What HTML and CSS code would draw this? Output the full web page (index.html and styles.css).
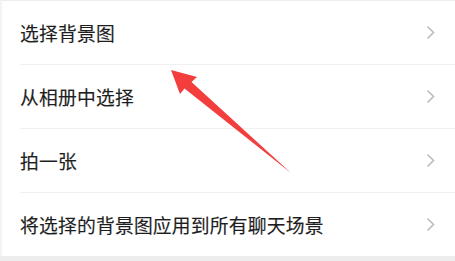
FILE: index.html
```html
<!DOCTYPE html>
<html lang="zh">
<head>
<meta charset="utf-8">
<link rel="stylesheet" href="styles.css">
</head>
<body>
<div class="page">
  <ul class="menu">
    <li class="item"><div class="inner"><span class="label">选择背景图</span><svg class="chev" viewBox="0 0 9 15"><path d="M1.5 1.5 L7.5 7.5 L1.5 13.5" fill="none" stroke="#bcbcbc" stroke-width="1.6"/></svg></div></li>
    <li class="item"><div class="inner"><span class="label">从相册中选择</span><svg class="chev" viewBox="0 0 9 15"><path d="M1.5 1.5 L7.5 7.5 L1.5 13.5" fill="none" stroke="#bcbcbc" stroke-width="1.6"/></svg></div></li>
    <li class="item"><div class="inner"><span class="label">拍一张</span><svg class="chev" viewBox="0 0 9 15"><path d="M1.5 1.5 L7.5 7.5 L1.5 13.5" fill="none" stroke="#bcbcbc" stroke-width="1.6"/></svg></div></li>
    <li class="item last"><div class="inner"><span class="label">将选择的背景图应用到所有聊天场景</span><svg class="chev" viewBox="0 0 9 15"><path d="M1.5 1.5 L7.5 7.5 L1.5 13.5" fill="none" stroke="#bcbcbc" stroke-width="1.6"/></svg></div></li>
  </ul>
  <div class="footer"></div>
  <svg class="arrow" viewBox="0 0 455 261" width="455" height="261">
    <path d="M171 70 L197 77 L191.5 82 L291 173 L184.5 88.5 L180 94 Z" fill="#f43d3d"/>
  </svg>
</div>
</body>
</html>
```

FILE: styles.css
```css
html, body {
  margin: 0;
  padding: 0;
  background: #ffffff;
}
.page {
  position: relative;
  width: 455px;
  height: 261px;
  overflow: hidden;
  background: #ffffff;
  font-family: "Noto Sans CJK SC", "Noto Sans", sans-serif;
}
.menu {
  list-style: none;
  margin: 0;
  padding: 0;
  border-top: 1px solid #ededed;
  border-left: 2px solid #f4f4f4;
}
.item {
  padding-left: 18px;
}
.inner {
  height: 63px;
  display: flex;
  align-items: center;
  justify-content: space-between;
  padding-right: 20px;
  border-bottom: 1px solid #f0f0f0;
}
.item.last .inner {
  border-bottom: none;
}
.label {
  font-size: 18.8px;
  color: #1e1e1e;
  letter-spacing: 0.2px;
  -webkit-text-stroke: 0.15px #1e1e1e;
}
.chev {
  width: 9px;
  height: 15px;
  display: block;
}
.footer {
  height: 5px;
  background: #ededed;
}
.arrow {
  position: absolute;
  left: 0;
  top: 0;
}
```
